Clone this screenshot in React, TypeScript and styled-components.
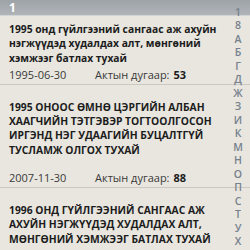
import styled, {createGlobalStyle} from "styled-components";

const GlobalStyle = createGlobalStyle`
    html, body {
        margin: 0;
        padding: 0;
        background: #e8e6df;
    }
    body {
        font-family: "Open Sans", "Noto Sans", "DejaVu Sans", sans-serif;
    }
`

const Screen = styled.div`
    position: relative;
    width: 250px;
    height: 250px;
    overflow: hidden;
    background: #e8e6df;
`

const SectionHeader = styled.div`
    height: 15px;
    padding-left: 9px;
    background: linear-gradient(#9ea3a8, #b0b4b8);
    border-bottom: 1px solid #d3d5d5;
    color: #ffffff;
    font-weight: 700;
    font-size: 12px;
    line-height: 15px;
`

const List = styled.div`
    display: flex;
    flex-direction: column;
`

const Item = styled.div`
    display: flex;
    flex-direction: column;
    padding: 15px 18px 2px 9px;
    border-bottom: 1px solid #cbc9c2;

    &:first-child {
        padding-top: 6px;
    }
`

const Title = styled.div`
    color: #1c1c1c;
    font-weight: 700;
    font-size: 10.3px;
    line-height: 14.3px;
`

const Meta = styled.div<{ $gap: number }>`
    display: flex;
    margin-top: ${p => p.$gap}px;
    color: #3a3a3a;
    font-size: 11px;
    line-height: 14px;
`

const Date = styled.span`
    width: 86px;
`

const Number = styled.b`
    color: #1c1c1c;
    margin-left: 4px;
`

const IndexBar = styled.div`
    position: absolute;
    top: 6px;
    right: 5px;
    width: 14px;
    display: flex;
    flex-direction: column;
    align-items: center;
`

const IndexLetter = styled.span`
    color: #76818d;
    font-weight: 600;
    font-size: 10.5px;
    line-height: 13.47px;
`

const acts = [
    {title: "1995 онд гүйлгээний сангаас аж ахуйн нэгжүүдэд худалдах алт, мөнгөний хэмжээг батлах тухай", date: "1995-06-30", num: "53", gap: 3},
    {title: "1995 ОНООС ӨМНӨ ЦЭРГИЙН АЛБАН ХААГЧИЙН ТЭТГЭВЭР ТОГТООЛГОСОН ИРГЭНД НЭГ УДААГИЙН БУЦАЛТГҮЙ ТУСЛАМЖ ОЛГОХ ТУХАЙ", date: "2007-11-30", num: "88", gap: 14},
    {title: "1996 ОНД ГҮЙЛГЭЭНИЙ САНГААС АЖ АХУЙН НЭГЖҮҮДЭД ХУДАЛДАХ АЛТ, МӨНГӨНИЙ ХЭМЖЭЭГ БАТЛАХ ТУХАЙ", date: "1996-05-17", num: "41", gap: 3},
]

const letters = ["1", "8", "А", "Б", "Г", "Д", "Ж", "З", "И", "К", "М", "Н", "О", "П", "С", "Т", "У", "Х"]

export default function App() {
    return (
        <Screen>
            <GlobalStyle/>
            <SectionHeader>1</SectionHeader>
            <List>
                {acts.map(a => (
                    <Item key={a.date}>
                        <Title>{a.title}</Title>
                        <Meta $gap={a.gap}>
                            <Date>{a.date}</Date>
                            <span>Актын дугаар:</span>
                            <Number>{a.num}</Number>
                        </Meta>
                    </Item>
                ))}
            </List>
            <IndexBar>
                {letters.map(l => <IndexLetter key={l}>{l}</IndexLetter>)}
            </IndexBar>
        </Screen>
    )
}
